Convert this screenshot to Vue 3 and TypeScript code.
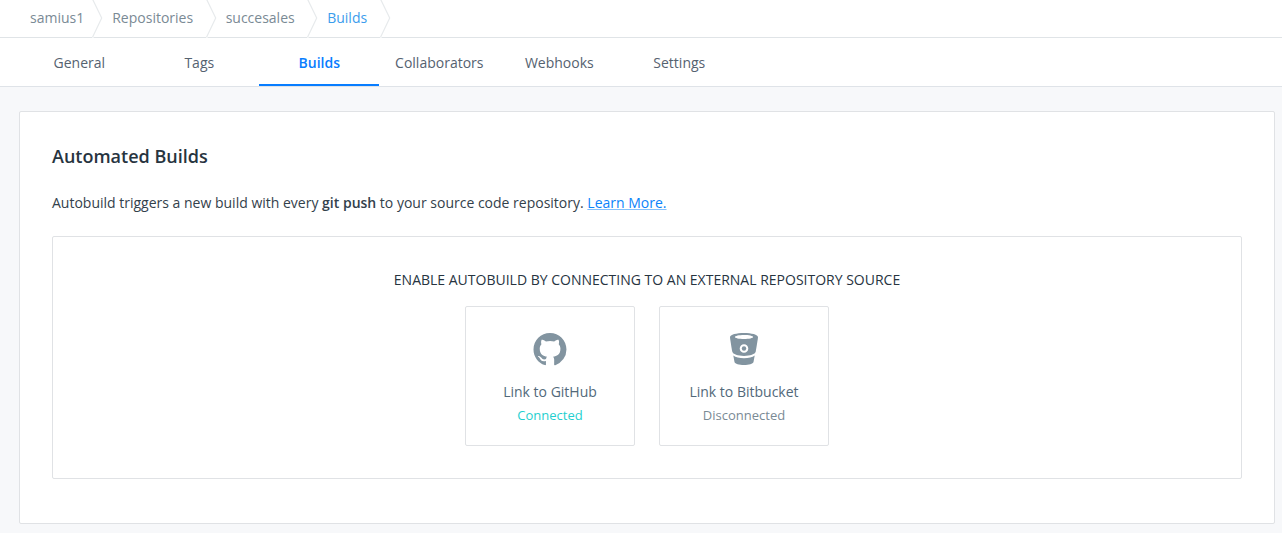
<script setup lang="ts">
interface Provider {
  id: 'github' | 'bitbucket'
  label: string
  connected: boolean
}

const crumbs: string[] = ['samius1', 'Repositories', 'succesales', 'Builds']
const tabs: string[] = ['General', 'Tags', 'Builds', 'Collaborators', 'Webhooks', 'Settings']
const activeTab = 'Builds'
const providers: Provider[] = [
  { id: 'github', label: 'Link to GitHub', connected: true },
  { id: 'bitbucket', label: 'Link to Bitbucket', connected: false },
]
</script>

<template>
  <div class="page">
    <nav class="crumbs">
      <template v-for="(crumb, i) in crumbs" :key="crumb">
        <a class="crumb" :class="{ current: i === crumbs.length - 1 }">{{ crumb }}</a>
        <svg class="chevron" width="12" height="38" viewBox="0 0 12 38">
          <path class="gap" d="M0 37.5h1.5" />
          <path d="M0.7 -0.5L9.700 18L0.4 37.5" />
        </svg>
      </template>
    </nav>
    <nav class="tabs">
      <a v-for="tab in tabs" :key="tab" class="tab" :class="{ active: tab === activeTab }">{{ tab }}</a>
    </nav>
    <main class="card">
      <h1 class="title">Automated Builds</h1>
      <p class="intro">
        Autobuild triggers a new build with every <strong>git push</strong> to your source code repository.
        <a class="link">Learn More.</a>
      </p>
      <section class="panel">
        <h2 class="panel-title">Enable Autobuild by connecting to an external repository source</h2>
        <div class="providers">
          <div v-for="p in providers" :key="p.id" class="provider">
            <svg v-if="p.id === 'github'" class="logo" width="34" height="34" viewBox="0 0 34 34">
              <path
                transform="translate(0.500 1) scale(2.06)"
                d="M8 0C3.58 0 0 3.58 0 8c0 3.54 2.29 6.53 5.47 7.59.4.07.58 0 .58-.2 0-.19-.01-1-.01-1.800-2.010.37-2.560-.36-2.720-.81-.09-.23-.48-.94-.82-1.130-.28-.15-.68-.52-.01-.53.63-.01 1.080.58 1.230.82.72 1.210 1.900.87 2.360.66.07-.52.28-.87.51-1.070-1.780-.2-3.560-.89-3.560-3.950 0-.87.31-1.590.82-2.150-.08-.2-.36-1.020.08-2.120 0 0 .59-.21 2.120.82.64-.18 1.320-.27 2-.27s1.360.09 2 .27c1.530-1.040 2.120-.82 2.120-.82.44 1.100.16 1.920.08 2.120.51.56.82 1.270.82 2.150 0 3.070-1.790 3.750-3.570 3.950.29.25.54.73.54 1.480 0 1.070-.01 1.930-.01 2.400 0 .21.15.27.55.19A8.010 8.010 0 0 0 16 8c0-4.420-3.580-8-8-8z"
              />
            </svg>
            <svg v-else class="logo" width="34" height="34" viewBox="0 0 34 34">
              <path
                fill-rule="evenodd"
                d="M17 1C9.5 1 3 2.6 3 5.2c0 .8 1.7 11.3 2.3 14.6C5.800 22.1 11 24 17 24s11.2-1.9 11.7-4.2C29.3 16.5 31 6 31 5.2 31 2.6 24.5 1 17 1zM17 2.9c5.1 0 9.1 .9 9.1 2s-4 2-9.1 2-9.1-.9-9.1-2 4-2 9.1-2zM17 12.2a4.3 4.3 0 1 1 0 8.6 4.3 4.3 0 0 1 0-8.6z"
              />
              <circle cx="17" cy="16.5" r="2.2" />
              <path d="M6.3 23.6C8.5 25.3 12.5 26.3 17 26.3s8.5-1 10.7-2.7l-1.2 6.3C25.9 31.7 22 33 17 33s-8.9-1.3-9.5-3.1z" />
            </svg>
            <span class="label">{{ p.label }}</span>
            <span class="status" :class="{ connected: p.connected }">{{
              p.connected ? 'Connected' : 'Disconnected'
            }}</span>
          </div>
        </div>
      </section>
    </main>
  </div>
</template>

<style>
body {
  margin: 0;
  background: #f7f8fa;
}
</style>

<style scoped>
.page {
  box-sizing: border-box;
  height: 533px;
  overflow: hidden;
  background: #f7f8fa;
  color: #254356;
  font: 14px/20px 'Open Sans', 'Liberation Sans', sans-serif;
}
.crumbs {
  display: flex;
  box-sizing: border-box;
  height: 38px;
  padding-left: 30px;
  background: #fff;
  border-bottom: 1px solid #e0e4e7;
}
.crumb {
  line-height: 36px;
  color: #7a8a95;
}
.crumb.current {
  color: #3b9ded;
}
.chevron {
  flex: none;
  margin: 0 8px 0 12.5px;
  fill: none;
  stroke: #e7eaec;
  stroke-width: 1.2;
}
.crumb:first-child + .chevron {
  margin-left: 8px;
}
.chevron .gap {
  stroke: #fff;
}
.tabs {
  display: flex;
  box-sizing: border-box;
  height: 49px;
  padding-left: 19px;
  background: #fff;
  border-bottom: 1px solid #dfe3e8;
}
.tab {
  box-sizing: border-box;
  width: 120px;
  height: 48px;
  padding-left: 0.6px;
  line-height: 50px;
  text-align: center;
  color: #556270;
}
.tab.active {
  border-bottom: 2px solid #087dff;
  color: #087dff;
  font-weight: 600;
}
.card {
  box-sizing: border-box;
  height: 413px;
  margin: 24px 7px 0 19px;
  padding: 31px 32px;
  background: #fff;
  border: 1px solid #e0e2e5;
  border-radius: 2px;
}
.title {
  margin: 0;
  font-size: 18px;
  line-height: 26px;
  font-weight: 600;
  color: #27343f;
}
.intro {
  margin: 24px 0 23px;
  color: #33414b;
}
.intro strong {
  font-weight: 600;
}
.link {
  color: #0b83fa;
  text-decoration: underline;
  text-decoration-color: #85c1fc;
}
.panel {
  box-sizing: border-box;
  height: 243px;
  padding-top: 33px;
  border: 1px solid #e0e2e5;
  border-radius: 2px;
}
.panel-title {
  margin: 0 0 16px;
  font-size: 14px;
  line-height: 20px;
  font-weight: 400;
  text-align: center;
  text-transform: uppercase;
  color: #27343f;
}
.providers {
  display: flex;
  justify-content: center;
  gap: 24px;
}
.provider {
  display: flex;
  flex-direction: column;
  align-items: center;
  box-sizing: border-box;
  width: 170px;
  height: 140px;
  padding-top: 25px;
  border: 1px solid #e0e2e5;
  border-radius: 2px;
}
.logo {
  fill: #8294a0;
}
.label {
  margin-top: 16px;
  color: #52697a;
}
.status {
  margin-top: 4px;
  font-size: 13px;
  line-height: 18px;
  color: #7a8a95;
}
.status.connected {
  color: #1fcfcf;
}
</style>
